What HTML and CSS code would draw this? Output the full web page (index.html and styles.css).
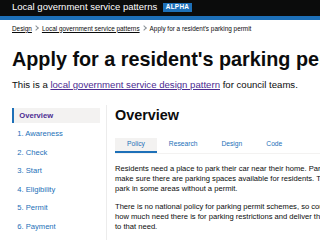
FILE: index.html
```html
<!DOCTYPE html>
<html lang="en">

<head>
    <meta charset="UTF-8">
    <meta name="viewport" content="width=device-width, initial-scale=1.0">
    <title>Apply for a resident's parking permit</title>
    <link rel="stylesheet" href="styles.css">
</head>

<body>
    <header class="header">
        <span class="header-title">Local government service patterns</span>
        <strong class="tag">Alpha</strong>
    </header>

    <div class="page">
        <nav class="breadcrumbs">
            <ol>
                <li><a href="#">Design</a></li>
                <li><a href="#">Local government service patterns</a></li>
                <li>Apply for a resident's parking permit</li>
            </ol>
        </nav>

        <h1 class="title">Apply for a resident's parking permit</h1>
        <p class="lead">This is a <a href="#" class="visited">local government service design pattern</a> for council teams.</p>

        <div class="columns">
            <aside class="side-nav">
                <a href="#" class="side-nav-current">Overview</a>
                <ul class="side-nav-list">
                    <li><a href="#">1. Awareness</a></li>
                    <li><a href="#">2. Check</a></li>
                    <li><a href="#">3. Start</a></li>
                    <li><a href="#">4. Eligibility</a></li>
                    <li><a href="#">5. Permit</a></li>
                    <li><a href="#">6. Payment</a></li>
                </ul>
            </aside>

            <main class="content">
                <h2 class="heading">Overview</h2>
                <ul class="tabs">
                    <li><a href="#" class="tab tab-selected">Policy</a></li>
                    <li><a href="#" class="tab">Research</a></li>
                    <li><a href="#" class="tab">Design</a></li>
                    <li><a href="#" class="tab">Code</a></li>
                </ul>
                <p class="body-text">Residents need a place to park their car near their home. Parking permits let councils make sure there are parking spaces available for residents. They mean others cannot park in some areas without a permit.</p>
                <p class="body-text">There is no national policy for parking permit schemes, so councils need to figure out how much need there is for parking restrictions and deliver the right service in response to that need.</p>
            </main>
        </div>
    </div>
</body>

</html>
```

FILE: styles.css
```css
* {
    box-sizing: border-box;
}

html {
    overflow: hidden;
}

body {
    margin: 0;
    font-family: "Liberation Sans", Arial, sans-serif;
    color: #0b0c0c;
    background-color: #fff;
}

a {
    color: #1d70b8;
}

a.visited {
    color: #4c2c92;
}

/* header */
.header {
    display: flex;
    align-items: flex-start;
    height: 20px;
    padding: 2px 0 0 12px;
    background-color: #0b0c0c;
    border-bottom: 4px solid #1d70b8;
}

.header-title {
    color: #fff;
    font-size: 9.5px;
    line-height: 10px;
    white-space: nowrap;
}

.tag {
    margin: 1.3px 0 0 6px;
    padding: 1.2px 2.5px 0.8px;
    background-color: #1d70b8;
    color: #fff;
    font-size: 6.4px;
    line-height: 6.4px;
    letter-spacing: 0.3px;
    text-transform: uppercase;
}

.page {
    width: 760px;
    padding: 0 12px;
}

/* breadcrumbs */
.breadcrumbs ol {
    display: flex;
    margin: 4.6px 0 0;
    padding: 0;
    list-style: none;
    font-size: 6.4px;
    line-height: 8px;
}

.breadcrumbs a {
    color: #0b0c0c;
}

.breadcrumbs li + li::before {
    content: "";
    display: inline-block;
    width: 3px;
    height: 3px;
    margin: 0 3.5px 0 2.5px;
    border-top: 0.8px solid #8a9196;
    border-right: 0.8px solid #8a9196;
    transform: rotate(45deg);
    vertical-align: 0.6px;
}

/* title and lead */
.title {
    margin: 16.2px 0 10px;
    font-size: 19.8px;
    line-height: 20.2px;
    font-weight: bold;
    white-space: nowrap;
}

.lead {
    margin: 0 0 14px;
    font-size: 9.6px;
    line-height: 12px;
}

/* two columns */
.columns {
    display: flex;
    min-height: 140px;
}

.side-nav {
    width: 88px;
    margin-right: 6px;
    padding-top: 3px;
}

.side-nav-current {
    display: block;
    height: 15px;
    margin-bottom: 2px;
    padding-left: 5.3px;
    background-color: #f3f2f1;
    border-left: 2px solid #1d70b8;
    color: #4c2c92;
    font-size: 7.6px;
    line-height: 15px;
    font-weight: bold;
    text-decoration: none;
}

.side-nav-list {
    margin: 0;
    padding: 0 0 0 5.3px;
    list-style: none;
    font-size: 7.6px;
    line-height: 18.6px;
}

.side-nav-list a {
    text-decoration: none;
}

.content {
    width: 305px;
    padding: 3px 0 0 8px;
    border-left: 1px solid #ececec;
}

.heading {
    margin: 0 0 15.6px;
    font-size: 14.4px;
    line-height: 14.4px;
    font-weight: bold;
}

/* tabs */
.tabs {
    display: flex;
    margin: 0 0 10px;
    padding: 0;
    list-style: none;
    border-bottom: 1px solid #f3f2f1;
}

.tab {
    display: block;
    padding: 0 12px 1px;
    border-bottom: 2px solid transparent;
    font-size: 6.7px;
    line-height: 12px;
    text-decoration: none;
}

.tab-selected {
    background-color: #f3f2f1;
    border-bottom-color: #1d70b8;
}

.body-text {
    margin: 0 0 8px;
    font-size: 7.6px;
    line-height: 10px;
}
```
